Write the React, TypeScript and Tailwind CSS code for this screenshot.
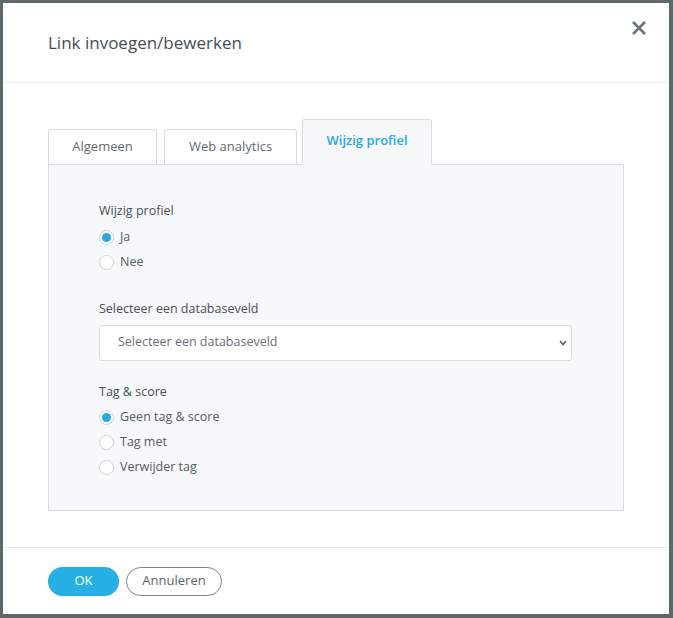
import React, { useState } from 'react';

type TabId = 'algemeen' | 'analytics' | 'profiel';

const TABS: { id: TabId; label: string; w: string; mr: string }[] = [
  { id: 'algemeen', label: 'Algemeen', w: 'w-[109px]', mr: 'mr-[7px]' },
  { id: 'analytics', label: 'Web analytics', w: 'w-[133px]', mr: 'mr-[5px]' },
  { id: 'profiel', label: 'Wijzig profiel', w: 'w-[130px]', mr: '' },
];

const Radio = ({ label, checked, onClick }: { label: string; checked: boolean; onClick: () => void }) => (
  <button onClick={onClick} className="flex items-center gap-[6px] h-[25px] text-left">
    <span
      className={`w-[15px] h-[15px] rounded-full border bg-white flex items-center justify-center ${
        checked ? 'border-[#cfd6dc]' : 'border-[#cfd3d6]'
      }`}
    >
      {checked && <span className="w-[9px] h-[9px] rounded-full bg-[#27aae1]" />}
    </span>
    <span className="text-[12.5px] text-[#555c63]">{label}</span>
  </button>
);

export default function App() {
  const [tab, setTab] = useState<TabId>('profiel');
  const [wijzig, setWijzig] = useState('ja');
  const [tag, setTag] = useState('geen');

  return (
    <div
      className="w-[673px] h-[618px] bg-[#5e676a] pt-[3px] pl-[3px] overflow-hidden"
      style={{ fontFamily: '"Open Sans", "Liberation Sans", sans-serif' }}
    >
      <div className="relative w-[666px] h-[611px] bg-white flex flex-col">
        <button className="absolute top-[17px] right-[22px] text-[#6b757e]">
          <svg width="16" height="16" viewBox="0 0 16 16" fill="none" stroke="currentColor" strokeWidth="2.6" strokeLinecap="butt">
            <path d="M2 2 L14 14 M14 2 L2 14" />
          </svg>
        </button>

        <div className="h-[80px] flex items-center pl-[45px] border-b border-[#e9ebed]">
          <h1 className="text-[17px] text-[#454e57]">Link invoegen/bewerken</h1>
        </div>

        <div className="flex-1 px-[45px] pt-[36px]">
          <div className="flex items-end">
            {TABS.map((t) => {
              const active = tab === t.id;
              return (
                <button
                  key={t.id}
                  onClick={() => setTab(t.id)}
                  className={`${t.w} ${t.mr} border border-[#d9dcdf] rounded-t-[3px] text-[13px] flex items-center justify-center ${
                    active
                      ? 'h-[46px] bg-[#f7f8fa] border-b-[#f7f8fa] -mb-px relative z-10 text-[#29a9e1] font-semibold pb-[2px]'
                      : 'h-[35px] bg-white border-b-0 text-[#636a71]'
                  }`}
                >
                  {t.label}
                </button>
              );
            })}
          </div>

          <div className="h-[347px] bg-[#f7f8fa] border border-[#d9dcdf] pl-[50px] pr-[51px] pt-[37px]">
            <div className="text-[12.5px] text-[#474f57] mb-[4px]">Wijzig profiel</div>
            <div className="flex flex-col">
              <Radio label="Ja" checked={wijzig === 'ja'} onClick={() => setWijzig('ja')} />
              <Radio label="Nee" checked={wijzig === 'nee'} onClick={() => setWijzig('nee')} />
            </div>

            <div className="text-[12.5px] text-[#474f57] mt-[25px] mb-[6px]">Selecteer een databaseveld</div>
            <div className="relative h-[36px] bg-white border border-[#d9dcdf] rounded-[3px] flex items-center pl-[18px]">
              <span className="text-[12.5px] text-[#6a7178]">Selecteer een databaseveld</span>
              <svg className="absolute right-[4px] top-[14px]" width="8" height="6" viewBox="0 0 8 6" fill="none" stroke="#555c63" strokeWidth="1.6">
                <path d="M1 1 L4 4.5 L7 1" />
              </svg>
            </div>

            <div className="text-[12.5px] text-[#474f57] mt-[22px] mb-[4px]">Tag &amp; score</div>
            <div className="flex flex-col">
              <Radio label="Geen tag & score" checked={tag === 'geen'} onClick={() => setTag('geen')} />
              <Radio label="Tag met" checked={tag === 'met'} onClick={() => setTag('met')} />
              <Radio label="Verwijder tag" checked={tag === 'verwijder'} onClick={() => setTag('verwijder')} />
            </div>
          </div>
        </div>

        <div className="h-[67px] border-t border-[#e9ebed] flex items-center pl-[45px] gap-[7px]">
          <button className="w-[71px] h-[29px] rounded-full bg-[#27b0e6] text-white text-[13px]">OK</button>
          <button className="w-[96px] h-[29px] rounded-full border border-[#7d848a] text-[#5d646b] text-[13px]">
            Annuleren
          </button>
        </div>
      </div>
    </div>
  );
}
